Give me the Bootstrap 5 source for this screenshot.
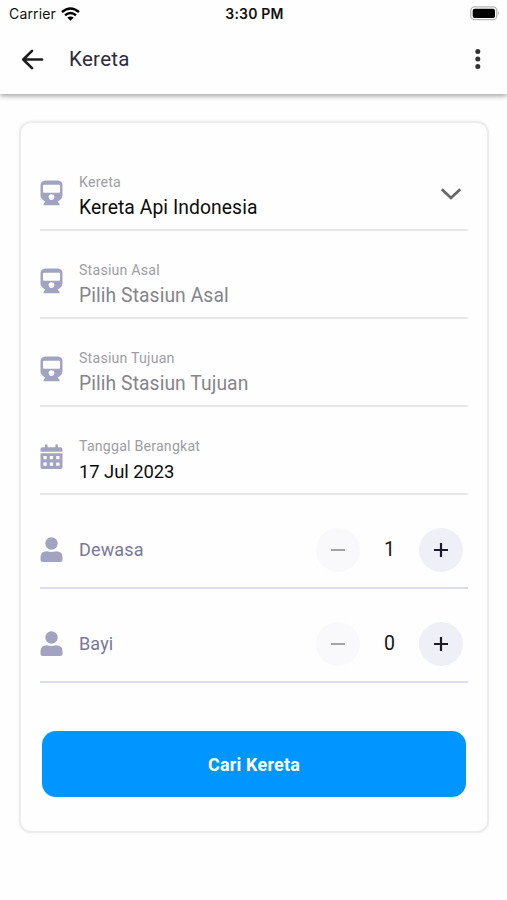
<!DOCTYPE html>
<html lang="id">
<head>
<meta charset="utf-8">
<meta name="viewport" content="width=device-width, initial-scale=1">
<title>Kereta</title>
<link href="https://cdn.jsdelivr.net/npm/bootstrap@5.3.0/dist/css/bootstrap.min.css" rel="stylesheet">
<style>
body{font-family:Roboto,sans-serif;background:#fefefe;color:#111;min-height:900px;overflow:hidden}
svg{display:block;flex:none}
.app-top{height:94px;background:#fefefe;box-shadow:0 2px 5px rgba(0,0,0,.36)}
.status{height:27px;font:14px/27px Inter,sans-serif;padding:0 7px 0 9px}
.status .side{width:110px}
.status .carrier{letter-spacing:.15px}
.status .wifi{margin-left:-3px}
.status .clock{font-weight:600;font-size:14px;letter-spacing:.2px}
.titlebar{height:64px;padding:0 19px 0 20px}
.titlebar h1{font-size:20.5px;font-weight:400;line-height:24px;color:#2b2b3d;letter-spacing:.3px;margin-left:24px}
.search-card{margin:27px 18px 0 19px;height:712px;border:2px solid #ededed;border-radius:12px;padding:20px 19px 0;background:#fefefe;box-shadow:0 0 3px rgba(0,0,0,.06)}
.field{height:88px;border-bottom:2px solid #e8e8e8;padding:31px 6px 0 0}
.field .ico,.counter .ico{width:23px;margin-right:16px;color:#a2a3c1}
.field .ico{margin-top:6px}
.cap{font-size:14.2px;line-height:17px;color:#9d9da3;letter-spacing:.2px}
.val{font-size:19.3px;line-height:24px;margin-top:5px;color:#0c0c0c;letter-spacing:.08px}
.val.empty{color:#85858a}
.val.date{font-size:18.4px;letter-spacing:-.05px}
.chev{margin-top:13px}
.counter{height:94px;border-bottom:2px solid #dcddea;padding:17px 5px 0 0}
.counter .who{font-size:18px;color:#78789a;letter-spacing:.15px}
.step{width:44px;height:44px;background:#eff0f7;color:#1b1b2b;border:0}
.step:disabled{background:#f9f9fb;color:#a4a4a7;opacity:1;border:0}
.num{width:59px;font-size:19.5px;color:#151515}
.go{height:66px;margin:48px 2px 0;width:424px;border-radius:14px;background:#0095ff;color:#fff;font-size:18px;font-weight:700;letter-spacing:.17px}
.go:hover{background:#0088ea;color:#fff}
</style>
</head>
<body>
<svg width="0" height="0" class="position-absolute" aria-hidden="true">
<symbol id="train" viewBox="0 0 23 26"><path fill="currentColor" fill-rule="evenodd" d="M5 .5H18Q22.500 1 22.500 5V15.500Q22.500 19 17.500 21.500L19.500 23.700V25.300H3.500V23.700L5.500 21.500Q.5 19 .5 15.500V5Q.5 1 5 .5ZM4 4.800Q3 4.800 3 5.800V11.700Q3 12.700 4 12.700H19Q20 12.700 20 11.700V5.800Q20 4.800 19 4.800ZM11.500 14.200A2.900 2.900 0 1 0 11.500 20A2.900 2.900 0 1 0 11.500 14.200Z"/></symbol>
<symbol id="person" viewBox="0 0 23 26"><g fill="currentColor"><circle cx="11.500" cy="6.500" r="6.200"/><path d="M7 14.200Q11.500 15.600 16 14.200 22.500 14.200 22.500 20.500V22.500Q22.500 25 20 25H3Q.5 25 .5 22.500V20.500Q.5 14.200 7 14.200Z"/></g></symbol>
</svg>
<header class="app-top">
  <div class="status d-flex align-items-center justify-content-between">
    <div class="side d-flex align-items-center gap-2"><span class="carrier">Carrier</span>
      <svg class="wifi" width="19" height="14" viewBox="0 0 19 14"><g fill="none" stroke="#000" stroke-width="2.400"><path d="M1 5Q9.500-2 18 5"/><path d="M4 8.300Q9.500 3.800 15 8.300"/></g><path d="M6.300 10.600Q9.500 8.200 12.700 10.600L9.500 13.800Z"/></svg>
    </div>
    <span class="clock">3:30 PM</span>
    <div class="side d-flex justify-content-end">
      <svg width="30" height="15" viewBox="0 0 30 15"><rect x=".8" y=".8" width="26" height="12.900" rx="3.800" fill="#fff" stroke="#b5b5b5" stroke-width="1.300"/><rect x="2.700" y="2.700" width="22.300" height="9.200" rx="2" fill="#000"/><path d="M28.200 5Q30 7.300 28.200 9.600Z" fill="#aaa"/></svg>
    </div>
  </div>
  <div class="titlebar d-flex align-items-center">
    <svg width="25" height="22" viewBox="0 0 25 22" fill="none" stroke="#1c1c1c" stroke-width="2.600" stroke-linecap="round" stroke-linejoin="round"><path d="M22 11.500H3.500M12 2.800L3.300 11.500 12 20.200"/></svg>
    <h1 class="mb-0">Kereta</h1>
    <svg class="ms-auto" width="20" height="22" viewBox="0 0 20 22" fill="#333"><circle cx="9.800" cy="3.500" r="2.500"/><circle cx="9.800" cy="11" r="2.500"/><circle cx="9.800" cy="18.500" r="2.500"/></svg>
  </div>
</header>
<main class="search-card">
  <div class="field d-flex">
    <svg class="ico" width="23" height="26"><use href="#train"/></svg>
    <div><div class="cap">Kereta</div><div class="val">Kereta Api Indonesia</div></div>
    <svg class="chev ms-auto" width="22" height="14" viewBox="0 0 22 14" fill="none" stroke="#666" stroke-width="2.700"><path d="M1.800 2.200L11 11 20.200 2.200"/></svg>
  </div>
  <div class="field d-flex">
    <svg class="ico" width="23" height="26"><use href="#train"/></svg>
    <div><div class="cap">Stasiun Asal</div><div class="val empty">Pilih Stasiun Asal</div></div>
  </div>
  <div class="field d-flex">
    <svg class="ico" width="23" height="26"><use href="#train"/></svg>
    <div><div class="cap">Stasiun Tujuan</div><div class="val empty">Pilih Stasiun Tujuan</div></div>
  </div>
  <div class="field d-flex">
    <svg class="ico" width="23" height="26" viewBox="0 0 23 26"><path fill="currentColor" fill-rule="evenodd" d="M5 1.500Q5 .3 6.300 .3T7.600 1.500V3.300H15.400V1.500Q15.400 .3 16.700 .3T18 1.500V3.300H20.500Q22.500 3.300 22.500 5.300V7.700H.5V5.300Q.5 3.300 2.500 3.300H5ZM.5 9.200H22.500V23Q22.500 25 20.500 25H2.500Q.5 25 .5 23ZM3.400 12V15.300H6.700V12ZM9.800 12V15.300H13.100V12ZM16.200 12V15.300H19.500V12ZM3.400 18.500V21.800H6.700V18.500ZM9.800 18.500V21.800H13.100V18.500ZM16.200 18.500V21.800H19.500V18.500Z"/></svg>
    <div><div class="cap">Tanggal Berangkat</div><div class="val date">17 Jul 2023</div></div>
  </div>
  <div class="counter d-flex align-items-center">
    <svg class="ico" width="23" height="26"><use href="#person"/></svg>
    <span class="who">Dewasa</span>
    <button class="step btn rounded-circle p-0 ms-auto d-flex align-items-center justify-content-center" disabled aria-label="Kurangi dewasa"><svg width="14" height="14" viewBox="0 0 14 14" stroke="currentColor" stroke-width="2"><path d="M0 7H14"/></svg></button>
    <span class="num text-center">1</span>
    <button class="step btn rounded-circle p-0 d-flex align-items-center justify-content-center" aria-label="Tambah dewasa"><svg width="14" height="14" viewBox="0 0 14 14" stroke="currentColor" stroke-width="2.200"><path d="M0 7H14M7 0V14"/></svg></button>
  </div>
  <div class="counter d-flex align-items-center">
    <svg class="ico" width="23" height="26"><use href="#person"/></svg>
    <span class="who">Bayi</span>
    <button class="step btn rounded-circle p-0 ms-auto d-flex align-items-center justify-content-center" disabled aria-label="Kurangi bayi"><svg width="14" height="14" viewBox="0 0 14 14" stroke="currentColor" stroke-width="2"><path d="M0 7H14"/></svg></button>
    <span class="num text-center">0</span>
    <button class="step btn rounded-circle p-0 d-flex align-items-center justify-content-center" aria-label="Tambah bayi"><svg width="14" height="14" viewBox="0 0 14 14" stroke="currentColor" stroke-width="2.200"><path d="M0 7H14M7 0V14"/></svg></button>
  </div>
  <button class="go btn border-0">Cari Kereta</button>
</main>
<script src="https://cdn.jsdelivr.net/npm/bootstrap@5.3.0/dist/js/bootstrap.bundle.min.js"></script>
</body>
</html>
